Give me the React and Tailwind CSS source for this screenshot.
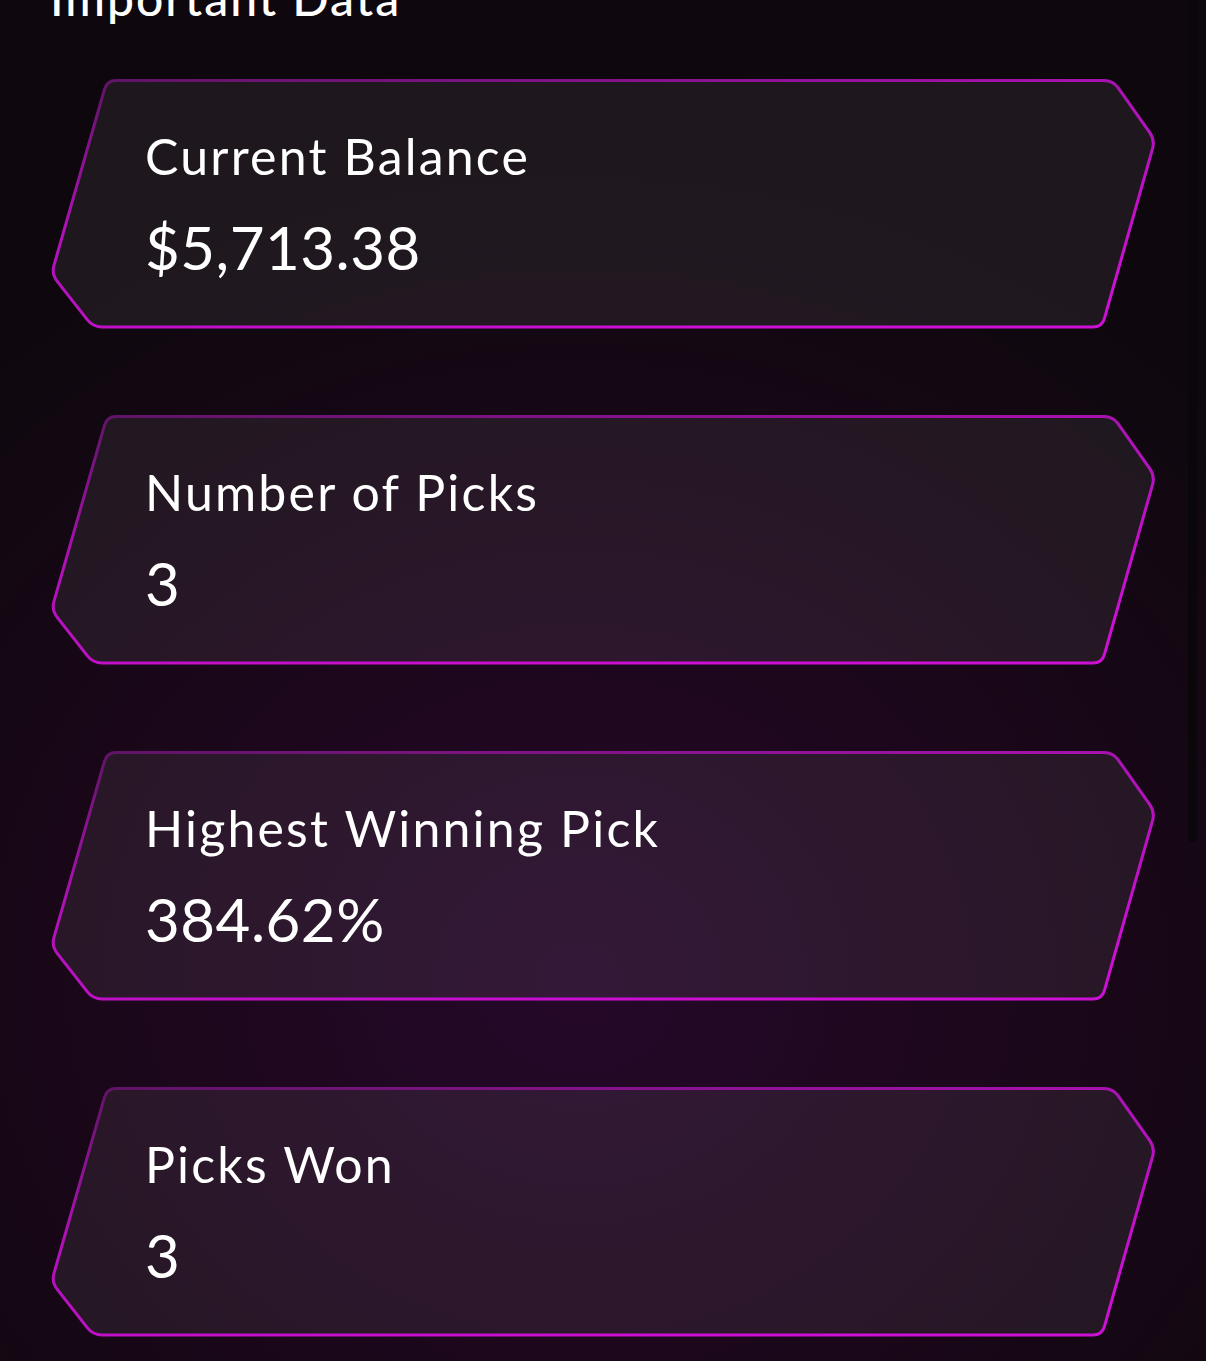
import React from "react";

const stats = [
  { label: "Current Balance", value: "$5,713.38" },
  { label: "Number of Picks", value: "3" },
  { label: "Highest Winning Pick", value: "384.62%" },
  { label: "Picks Won", value: "3" },
];

// card outline, rounded at each corner
const points = [
  [57, 1.5],
  [1063, 1.5],
  [1105, 61],
  [1052, 248],
  [43, 248],
  [1.5, 195],
];

function roundedPath(pts, r) {
  const n = pts.length;
  let d = "";
  for (let i = 0; i < n; i++) {
    const prev = pts[(i - 1 + n) % n];
    const cur = pts[i];
    const next = pts[(i + 1) % n];
    const v1 = [prev[0] - cur[0], prev[1] - cur[1]];
    const v2 = [next[0] - cur[0], next[1] - cur[1]];
    const l1 = Math.hypot(v1[0], v1[1]);
    const l2 = Math.hypot(v2[0], v2[1]);
    const a = [cur[0] + (v1[0] / l1) * r, cur[1] + (v1[1] / l1) * r];
    const b = [cur[0] + (v2[0] / l2) * r, cur[1] + (v2[1] / l2) * r];
    d += `${i === 0 ? "M" : "L"}${a[0]},${a[1]} Q${cur[0]},${cur[1]} ${b[0]},${b[1]} `;
  }
  return d + "Z";
}

const cardPath = roundedPath(points, 9);

function StatCard({ label, value, id }) {
  return (
    <div className="relative w-[1107px] h-[250px] ml-[50px]">
      <svg
        className="absolute inset-0"
        width="1107"
        height="250"
        viewBox="0 0 1107 250"
      >
        <defs>
          <linearGradient id={`stroke-${id}`} x1="0" y1="0" x2="0.6" y2="1">
            <stop offset="0%" stopColor="#5c1462" />
            <stop offset="45%" stopColor="#ad12b5" />
            <stop offset="100%" stopColor="#cc10d4" />
          </linearGradient>
        </defs>
        <path
          d={cardPath}
          fill="rgba(255,255,255,0.065)"
          stroke={`url(#stroke-${id})`}
          strokeWidth="3"
        />
      </svg>
      <div className="relative pl-[95px] pt-[47px] text-white" style={{ fontFamily: "Lato, sans-serif" }}>
        <div className="text-[50px] leading-[60px] tracking-[2.2px]">{label}</div>
        <div className="mt-[26px] text-[60px] leading-[70px] tracking-[0.5px]">{value}</div>
      </div>
    </div>
  );
}

export default function App() {
  return (
    <div className="relative min-h-[1361px] h-[1361px] overflow-hidden bg-[#0e080e] bg-[radial-gradient(ellipse_75%_60%_at_48%_72%,#26082a_0%,#1a0719_55%,#0e080e_100%)]">
      <div className="absolute right-[9px] top-0 w-[9px] h-[842px] rounded-b-full bg-[#0b060b]" />
      <h1
        className="ml-[50px] -mt-[30px] text-[48px] leading-[56px] font-medium tracking-[2px] text-white"
        style={{ fontFamily: "Lato, sans-serif" }}
      >
        Important Data
      </h1>
      <div className="mt-[53px] flex flex-col gap-[86px]">
        {stats.map((s, i) => (
          <StatCard key={s.label} id={i} label={s.label} value={s.value} />
        ))}
      </div>
    </div>
  );
}
